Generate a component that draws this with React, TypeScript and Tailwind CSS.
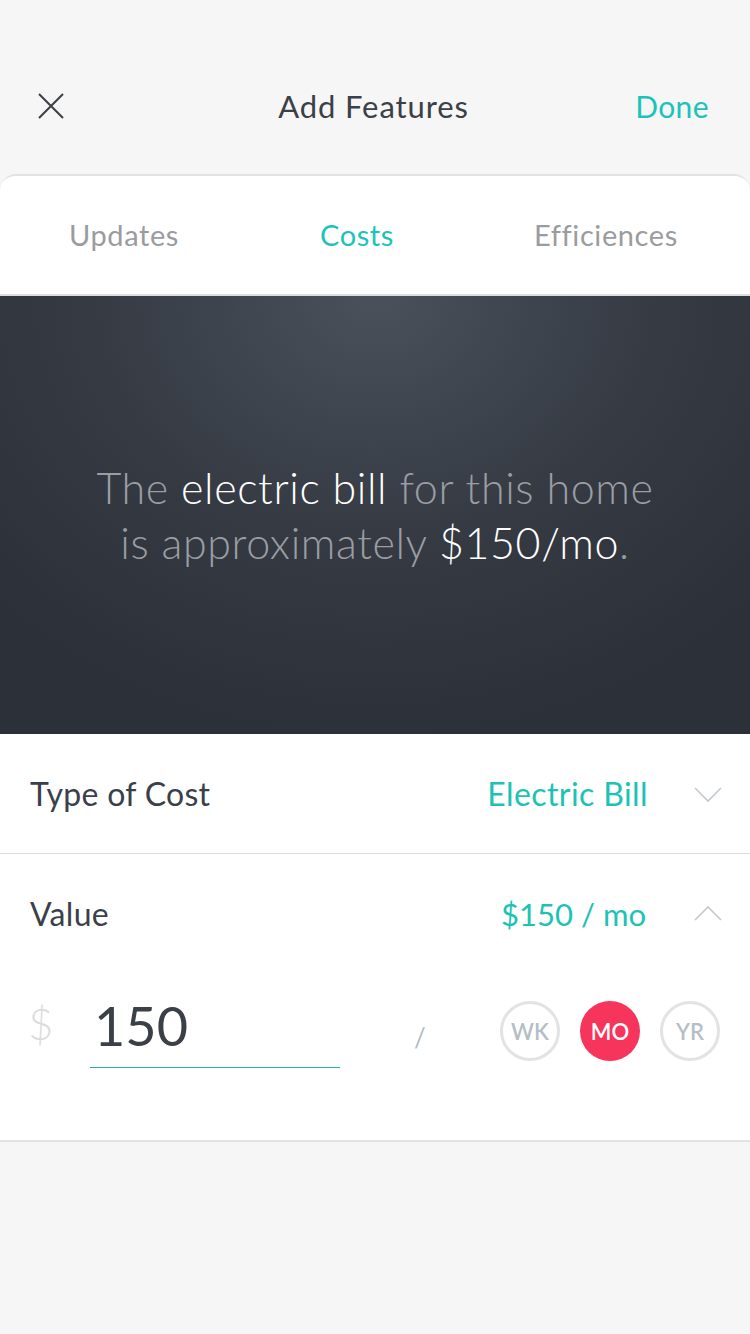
import React from "react";

const ui = { fontFamily: "Lato, 'Open Sans', sans-serif" };
const hero = { fontFamily: "Lato, 'Noto Sans', sans-serif" };

function Chevron({ up }: { up?: boolean }) {
  return (
    <svg width="28" height="16" viewBox="0 0 28 16" fill="none" className="text-[#c4c9cf]">
      <path
        d={up ? "M1 15 L14 2 L27 15" : "M1 1 L14 14 L27 1"}
        stroke="currentColor"
        strokeWidth="1.6"
      />
    </svg>
  );
}

export default function App() {
  const [period, setPeriod] = React.useState("MO");

  return (
    <div className="w-[750px] h-[1334px] bg-[#f6f6f6] flex flex-col" style={ui}>
      {/* Header */}
      <div className="h-[174px] grid grid-cols-[1fr_auto_1fr] items-center pl-[38px] pr-[41px] pt-[38px]">
        <svg width="26" height="26" viewBox="0 0 26 26" className="text-[#3b3f45]">
          <path d="M1 1 L25 25 M25 1 L1 25" stroke="currentColor" strokeWidth="2" />
        </svg>
        <h1 className="text-[31px] tracking-[0.9px] text-[#3b3f46]">Add Features</h1>
        <button className="justify-self-end text-[30px] tracking-[0.4px] text-[#1cc3bb]">Done</button>
      </div>

      {/* Card */}
      <div className="bg-white border-t-2 border-[#e3e3e3] rounded-t-[16px]">
        <div className="h-[120px] flex items-center border-b-2 border-[#dedede] text-[29px] tracking-[0.6px]">
          <div className="w-[248px] text-center text-[#9a9ca0]">Updates</div>
          <div className="w-[218px] text-center text-[#1cc3bb]">Costs</div>
          <div className="flex-1 text-center text-[#9a9ca0] pr-[4px]">Efficiences</div>
        </div>

        {/* Hero */}
        <div className="h-[438px] flex items-center justify-center bg-[radial-gradient(ellipse_520px_440px_at_50%_0%,#4a515b_0%,#353a43_55%,#2b3039_100%)]">
          <p
            className="text-center text-[43px] leading-[55px] font-light text-[#9a9da3] tracking-[0.6px]"
            style={hero}
          >
            The <span className="text-white">electric bill</span> for this home
            <br />
            is approximately <span className="text-white">$150/mo</span>.
          </p>
        </div>

        {/* Type of Cost */}
        <div className="h-[120px] flex items-center pl-[30px] pr-[28px] border-b border-[#dcdcdc]">
          <span className="text-[32px] tracking-[0.3px] text-[#3b3f4a]">Type of Cost</span>
          <span className="ml-auto text-[32px] tracking-[0.4px] text-[#1cc3b4]">Electric Bill</span>
          <span className="ml-[46px] mt-[2px]">
            <Chevron />
          </span>
        </div>

        {/* Value */}
        <div className="border-b-2 border-[#e3e3e3]">
          <div className="h-[120px] flex items-center pl-[30px] pr-[28px]">
            <span className="text-[32px] tracking-[0.3px] text-[#3b3f4a]">Value</span>
            <span className="ml-auto text-[31px] text-[#1cc3b4]">$150 / mo</span>
            <span className="ml-[48px] -mt-[2px]">
              <Chevron up />
            </span>
          </div>
          <div className="h-[166px] flex items-start pl-[28px] pr-[30px] pt-[20px]">
            <span className="text-[44px] text-[#dcdcdc] font-light -mt-[4px] w-[62px]">$</span>
            <div className="w-[250px] border-b-[1.5px] border-[#2ab0ab] h-[74px]">
              <span className="text-[54px] leading-[64px] text-[#3b3f46] pl-[4px]" style={hero}>
                150
              </span>
            </div>
            <span className="text-[26px] text-[#b4bcc4] ml-[74px] mt-[24px]">/</span>
            <div className="ml-auto flex gap-[20px] mt-[7px]">
              {["WK", "MO", "YR"].map((p) => (
                <button
                  key={p}
                  onClick={() => setPeriod(p)}
                  className={
                    p === period
                      ? "w-[60px] h-[60px] rounded-full bg-[#f7345b] text-white text-[22px] font-semibold flex items-center justify-center"
                      : "w-[60px] h-[60px] rounded-full border-[3px] border-[#e3e3e3] text-[#b5bec6] text-[22px] font-semibold flex items-center justify-center"
                  }
                >
                  {p}
                </button>
              ))}
            </div>
          </div>
        </div>
      </div>
    </div>
  );
}
